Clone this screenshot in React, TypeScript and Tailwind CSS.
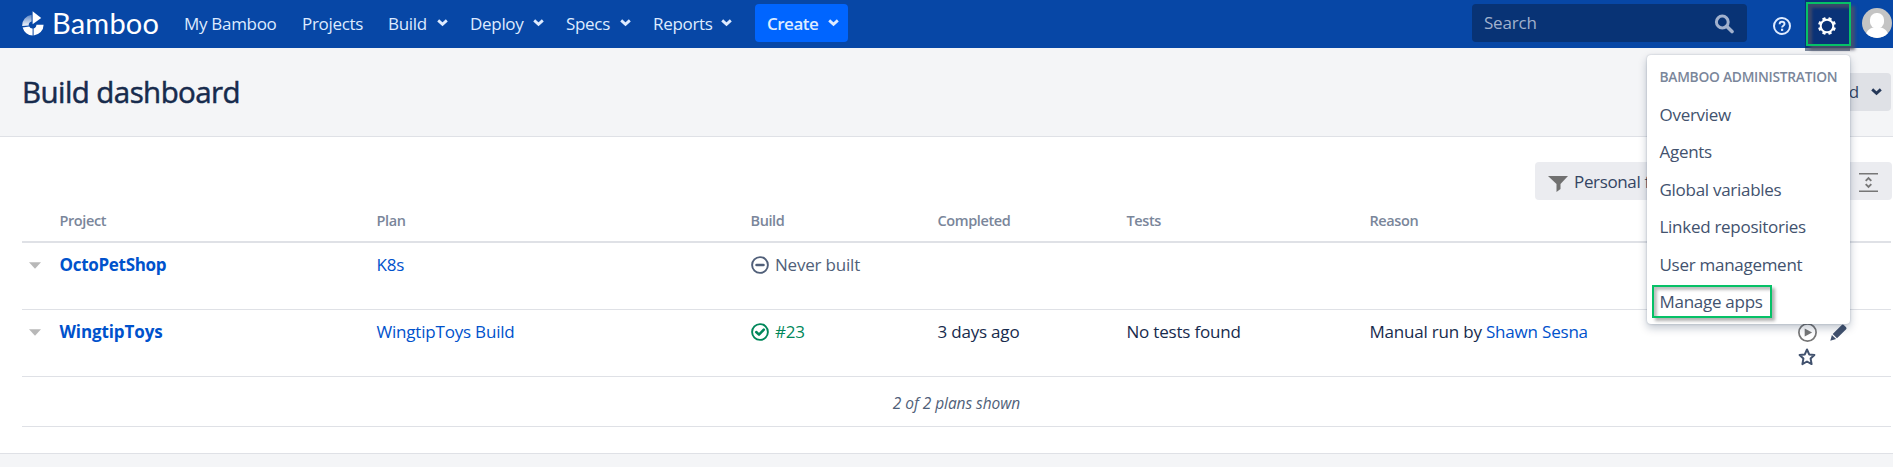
import type { ReactNode } from "react";

const Chevron = ({ className = "" }: { className?: string }) => (
  <svg viewBox="0 0 11 8" className={"h-2 w-[11px] shrink-0 " + className} fill="none" stroke="currentColor" strokeWidth="2.8">
    <path d="M1.2 1.4 5.5 5.4l4.3-4" />
  </svg>
);

const Logo = () => (
  <svg viewBox="0 0 22 25" className="h-[25px] w-[22px] shrink-0">
    <defs>
      <linearGradient id="fade" x1="0" y1="0" x2="0" y2="1">
        <stop offset="0" stopColor="#fff" stopOpacity="0.35" />
        <stop offset="1" stopColor="#fff" stopOpacity="0.95" />
      </linearGradient>
    </defs>
    <path d="M10.6 0.3v13L19.2 7z" fill="#fff" />
    <path d="M14.4 13.8h7.2a10.6 10.6 0 0 1-10 10.6v-7a3.6 3.6 0 0 0 2.8-3.6z" fill="#fff" />
    <path d="M7.2 15.4a3.6 3.6 0 0 0 3.4 2v7A10.6 10.6 0 0 1 .6 16.6z" fill="#fff" />
    <path d="M.2 15A10.8 10.8 0 0 1 9.6 3.8v6.6a3.8 3.8 0 0 0-2.8 4.2z" fill="url(#fade)" />
  </svg>
);

const SearchIcon = () => (
  <svg viewBox="0 0 20 20" className="h-5 w-5" fill="none" stroke="#a1b1cd">
    <circle cx="8.3" cy="8" r="5.9" strokeWidth="3" />
    <path d="m12.6 12.3 5.4 5.2" strokeWidth="3.6" strokeLinecap="round" />
  </svg>
);

const HelpIcon = () => (
  <svg viewBox="0 0 18 18" className="h-[18px] w-[18px]" fill="none" stroke="#deebff">
    <circle cx="9" cy="9" r="8" strokeWidth="2" />
    <path d="M6.6 7.2c0-1.500 1-2.400 2.400-2.400s2.500.8 2.500 2.200c0 1.800-2.400 1.800-2.400 3.600" strokeWidth="1.9" />
    <path d="M9.100 11.700v2.200" strokeWidth="2.200" />
  </svg>
);

const teeth = [0, 45, 90, 135, 180, 225, 270, 315];

const GearIcon = () => (
  <svg viewBox="0 0 18 18" className="h-[18px] w-[18px]">
    <circle cx="9" cy="9" r="6.300" fill="none" stroke="#fff" strokeWidth="2" />
    {teeth.map((a) => (
      <rect key={a} x="7.300" y="0" width="3.400" height="2.400" rx="0.500" fill="#fff" transform={`rotate(${a + 22.5} 9 9)`} />
    ))}
  </svg>
);

const Avatar = () => (
  <svg viewBox="0 0 30 30" className="h-[30px] w-[30px]">
    <defs>
      <clipPath id="disc"><circle cx="15" cy="15" r="15" /></clipPath>
    </defs>
    <g clipPath="url(#disc)">
      <rect width="30" height="30" fill="#c4c4c4" />
      <rect x="8" y="5" width="14" height="15.500" rx="6.500" fill="#fff" />
      <path d="M3.500 30c0-7 4-11 11.500-11s11.500 4 11.500 11z" fill="#fff" />
    </g>
  </svg>
);

const StatusIcon = ({ ok }: { ok: boolean }) => (
  <svg viewBox="0 0 18 18" className={"h-[18px] w-[18px] shrink-0 " + (ok ? "text-[#00875a]" : "text-[#505f79]")} fill="none" stroke="currentColor">
    <circle cx="9" cy="9" r="7.900" strokeWidth="1.900" />
    {ok ? (
      <path d="m5.200 9 2.800 2.700 4.800-5" strokeWidth="2.500" strokeLinecap="round" strokeLinejoin="round" />
    ) : (
      <path d="M5.600 9h6.800" strokeWidth="2.700" strokeLinecap="round" />
    )}
  </svg>
);

const Caret = () => (
  <svg viewBox="0 0 12 7" className="ml-[7px] mt-[19px] h-[7px] w-3"><path d="M0 .3h12L6 6.700z" fill="#b8b8b8" /></svg>
);

const nav = [
  { label: "My Bamboo", cls: "w-[118px]", menu: false },
  { label: "Projects", cls: "w-[86px]", menu: false },
  { label: "Build", cls: "w-[82px]", menu: true },
  { label: "Deploy", cls: "w-[96px]", menu: true },
  { label: "Specs", cls: "w-[87px]", menu: true },
  { label: "Reports", cls: "w-[101px]", menu: true },
];

const items = ["Overview", "Agents", "Global variables", "Linked repositories", "User management", "Manage apps"];

const Row = ({ children, className }: { children: ReactNode; className: string }) => (
  <div className={"ml-[22px] grid w-[1869px] grid-cols-[37.5px_317px_374px_187px_189px_243px_427px_1fr] border-[#dfe1e6] " + className}>
    {children}
  </div>
);

export default function App() {
  return (
    <div className="relative flex h-[467px] w-[1893px] flex-col overflow-hidden whitespace-nowrap bg-white font-['Open_Sans',sans-serif] text-[17px] tracking-[-0.2px] text-[#172b4d]">
      <header className="flex h-12 shrink-0 bg-[#0747a6] pl-[22px] text-[#deebff]">
        <div className="flex w-[162px] pt-[11px] text-white">
          <Logo />
          <span className="ml-[8px] mt-[-5px] font-[Lato,sans-serif] text-[29px] leading-[34px] tracking-[0.2px]">Bamboo</span>
        </div>
        {nav.map((n) => (
          <div key={n.label} className={"flex justify-between pr-[22px] pt-3 leading-6 tracking-[-0.3px] " + n.cls}>
            <span>{n.label}</span>
            {n.menu && <Chevron className="mt-[7px]" />}
          </div>
        ))}
        <div className="ml-px mt-1 flex h-[38px] w-[93px] justify-between rounded bg-[#0065ff] pl-[12px] pr-[9px] pt-2 font-semibold leading-6 tracking-[-0.5px]">
          <span>Create</span>
          <Chevron className="mt-[7px]" />
        </div>
        <div className="ml-auto mt-1 flex h-[38px] w-[275px] justify-between rounded bg-[#083375] pl-3 pr-[13px] pt-[7px] leading-6 text-[#a1b1cd]">
          <span>Search</span>
          <div className="pt-[3px]"><SearchIcon /></div>
        </div>
        <div className="ml-[26px] mt-[17px]"><HelpIcon /></div>
        <div className="z-10 ml-[14px] h-[51px] w-[45px] bg-[#0a3277] pl-px pt-0.5 shadow-[inset_0_-3px_0_#7a869a]">
          <div className="flex h-11 w-[45px] items-center justify-center border-2 border-[#06c167] pr-1 pt-[4px] shadow-[4px_4px_3px_rgba(80,80,100,0.8),inset_4px_4px_3px_rgba(80,80,100,0.7)]">
            <GearIcon />
          </div>
        </div>
        <div className="ml-3 mr-px mt-2"><Avatar /></div>
      </header>

      <section className="flex h-[89px] shrink-0 justify-between border-b border-[#dfe1e6] bg-[#f4f5f7] pl-[22px] pr-0.5 pt-6">
        <h1 className="text-[29.5px] leading-10 tracking-[-0.57px] [-webkit-text-stroke:0.5px_#172b4d]">Build dashboard</h1>
        <div className="mt-px flex h-[38px] w-[60px] justify-end rounded bg-[#dfe1e6] pr-[9px] pt-[7px] leading-6 text-[#344563]">
          <span>d</span>
          <Chevron className="ml-[12px] mt-[8px] text-[#253858]" />
        </div>
      </section>

      <div className="mt-[25px] flex h-[38px] shrink-0 justify-end pr-px text-[#344563]">
        <div className="flex w-[246px] rounded-l bg-[#ebecf0] pl-[13px] pt-[8px] leading-6">
          <svg viewBox="0 0 20 16" className="mt-[6px] h-4 w-5"><path d="M0 0h20l-7.500 8v5l-4 3V8z" fill="#707070" /></svg>
          <span className="ml-[6px] tracking-[-0.35px]">Personal f</span>
        </div>
        <div className="w-[111px] rounded-r bg-[#ebecf0] pl-[78px] pt-[11px]">
          <svg viewBox="0 0 19 19" className="h-[19px] w-[19px]" fill="none" stroke="#777">
            <path d="M0 .7h19M0 18.300h19" strokeWidth="1.400" />
            <path d="M6.700 7.800l2.800-2.800 2.800 2.800M6.700 11.200l2.800 2.800 2.800-2.800" strokeWidth="1.900" />
          </svg>
        </div>
      </div>

      <Row className="h-[43px] shrink-0 border-b-2 pt-[11px] text-[14.500px] font-semibold leading-5 tracking-[-0.4px] text-[#7a869a]">
        <span />
        <span>Project</span>
        <span>Plan</span>
        <span>Build</span>
        <span>Completed</span>
        <span>Tests</span>
        <span>Reason</span>
      </Row>
      <Row className="h-[67px] shrink-0 border-b leading-[44px]">
        <Caret />
        <span className="font-bold tracking-[-0.3px] text-[#0052cc]">OctoPetShop</span>
        <span className="text-[#0052cc]">K8s</span>
        <span className="flex h-[44px] items-center gap-[6px] pl-[0.5px] text-[#505f79]"><StatusIcon ok={false} />Never built</span>
      </Row>
      <Row className="h-[67px] shrink-0 border-b leading-[44px]">
        <Caret />
        <span className="font-bold tracking-[-0.1px] text-[#0052cc]">WingtipToys</span>
        <span className="text-[#0052cc]">WingtipToys Build</span>
        <span className="flex h-[44px] items-center gap-[6px] pl-[0.5px] text-[#00875a]"><StatusIcon ok />#23</span>
        <span>3 days ago</span>
        <span>No tests found</span>
        <span>Manual run by <span className="text-[#0052cc]">Shawn Sesna</span></span>
        <div className="flex w-[56px] flex-wrap content-start gap-x-[13px] gap-y-[6px] pl-[1.500px] pt-[13px]">
          <svg viewBox="0 0 19 19" className="h-[19px] w-[19px]" fill="none" stroke="#777">
            <circle cx="9.500" cy="9.500" r="8.600" strokeWidth="1.700" />
            <path d="m6.700 5.500 7.400 4-7.400 4z" fill="#777" stroke="none" />
          </svg>
          <svg viewBox="0 0 17 17" className="mt-px h-[17px] w-[17px]" fill="#42526e">
            <path d="M11.500 1.200a1.800 1.800 0 0 1 2.500 0l1.900 1.800a1.800 1.800 0 0 1 0 2.500L7 14.200 2.700 10zM1.900 10.900l4.200 4.100L.3 16.700z" />
          </svg>
          <svg viewBox="0 0 18 18" className="h-[18px] w-[18px]" fill="none" stroke="#42526e" strokeWidth="2" strokeLinejoin="round">
            <path d="m9 1.500 2.200 4.900 5.200.6-3.800 3.600 1 5.500L9 13.500l-4.600 2.600 1-5.500L1.600 7l5.200-.6z" />
          </svg>
        </div>
      </Row>
      <div className="ml-[22px] h-[50px] w-[1869px] shrink-0 border-b border-[#dfe1e6] pt-[14px] text-center text-[15.500px] italic leading-6 tracking-[-0.05px] text-[#505f79]">
        2 of 2 plans shown
      </div>
      <footer className="mt-[26px] h-[14px] shrink-0 border-t border-[#dfe1e6] bg-[#f4f5f7]" />

      <div className="absolute left-[1647px] top-[55px] h-[269px] w-[203px] rounded bg-white pl-[12.500px] text-[#42526e] shadow-[0_4px_9px_rgba(9,30,66,0.25),0_0_2px_rgba(9,30,66,0.25)]">
        <div className="pt-[12px] text-[13.800px] font-semibold leading-5 tracking-[-0.27px] text-[#7a869a]">BAMBOO ADMINISTRATION</div>
        <div className="mt-[9px] flex flex-col tracking-[-0.28px]">
          {items.map((t) => (
            <div key={t} className="h-[37.400px] leading-[37px]">{t}</div>
          ))}
        </div>
        <div className="absolute left-[5px] top-[230px] h-[33px] w-[120px] border-2 border-[#06c167] shadow-[3px_3px_3px_rgba(0,0,0,0.3),inset_3px_3px_3px_rgba(0,0,0,0.25)]" />
      </div>
    </div>
  );
}
